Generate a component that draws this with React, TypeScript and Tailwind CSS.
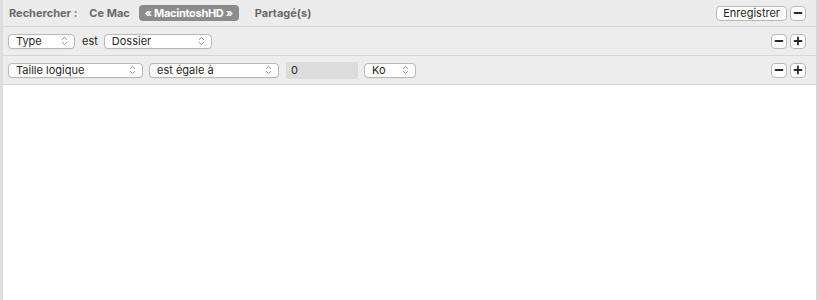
import React from 'react';

const font = { fontFamily: 'Inter, "Noto Sans", sans-serif' };

function Chevrons() {
  return (
    <svg width="7" height="10" viewBox="0 0 7 10" className="shrink-0">
      <path d="M1.2 3.6 L3.5 1.4 L5.8 3.6" fill="none" stroke="#8e8e8e" strokeWidth="1" strokeLinecap="round" strokeLinejoin="round" />
      <path d="M1.2 6.4 L3.5 8.6 L5.8 6.4" fill="none" stroke="#8e8e8e" strokeWidth="1" strokeLinecap="round" strokeLinejoin="round" />
    </svg>
  );
}

function Popup({ label, width }: { label: string; width: string }) {
  return (
    <div className={`${width} h-[15px] flex items-center justify-between pl-[7px] pr-[6px] bg-white border border-[#b9b9b9] rounded-[4px] text-[11px] text-[#262626] shadow-[0_0.5px_0.5px_rgba(0,0,0,0.08)]`}>
      <span className="leading-none">{label}</span>
      <Chevrons />
    </div>
  );
}

function SmallBtn({ children }: { children: React.ReactNode }) {
  return (
    <div className="w-[16px] h-[15px] flex items-center justify-center bg-white border border-[#b9b9b9] rounded-[4px]">
      {children}
    </div>
  );
}

const Minus = () => (
  <svg width="10" height="10" viewBox="0 0 10 10">
    <path d="M1.5 5 H8.5" stroke="#2a2a2a" strokeWidth="1.8" strokeLinecap="round" />
  </svg>
);
const Plus = () => (
  <svg width="10" height="10" viewBox="0 0 10 10">
    <path d="M1.5 5 H8.5 M5 1.5 V8.5" stroke="#2a2a2a" strokeWidth="1.8" strokeLinecap="round" />
  </svg>
);

export default function App() {
  return (
    <div className="w-[819px] h-[300px] flex bg-white overflow-hidden" style={font}>
      <div className="w-[3px] bg-[#dedede] shrink-0" />
      <div className="flex-1 flex flex-col">
        {/* scope bar */}
        <div className="h-[27px] shrink-0 flex items-center justify-between bg-[#ececec] border-b border-[#d6d6d6] pl-[6px] pr-[10px]">
          <div className="flex items-center text-[11px] font-bold text-[#6a6a6a]">
            <span>Rechercher :</span>
            <span className="ml-[12px]">Ce Mac</span>
            <span className="ml-[9px] px-[6px] h-[16px] flex items-center rounded-[4px] bg-[#8c8c8c] text-white tracking-[-0.3px]">« MacintoshHD »</span>
            <span className="ml-[16px]">Partagé(s)</span>
          </div>
          <div className="flex items-center gap-[3px]">
            <div className="h-[15px] px-[6px] flex items-center bg-white border border-[#b9b9b9] rounded-[4px] text-[11px] text-[#262626]">Enregistrer</div>
            <SmallBtn><Minus /></SmallBtn>
          </div>
        </div>

        {/* criterion 1 */}
        <div className="h-[29px] shrink-0 flex items-center justify-between bg-[#ededed] border-b border-[#d6d6d6] pl-[5px] pr-[10px]">
          <div className="flex items-center">
            <Popup label="Type" width="w-[67px]" />
            <span className="ml-[7px] mr-[6px] text-[11px] text-[#262626]">est</span>
            <Popup label="Dossier" width="w-[108px]" />
          </div>
          <div className="flex items-center gap-[3px]">
            <SmallBtn><Minus /></SmallBtn>
            <SmallBtn><Plus /></SmallBtn>
          </div>
        </div>

        {/* criterion 2 */}
        <div className="h-[29px] shrink-0 flex items-center justify-between bg-[#ededed] border-b border-[#d6d6d6] pl-[5px] pr-[10px]">
          <div className="flex items-center">
            <Popup label="Taille logique" width="w-[135px]" />
            <div className="w-[6px]" />
            <Popup label="est égale à" width="w-[130px]" />
            <div className="ml-[7px] w-[72px] h-[17px] flex items-center pl-[5px] bg-[#dcdcdc] text-[11px] text-[#262626]">0</div>
            <div className="w-[6px]" />
            <Popup label="Ko" width="w-[52px]" />
          </div>
          <div className="flex items-center gap-[3px]">
            <SmallBtn><Minus /></SmallBtn>
            <SmallBtn><Plus /></SmallBtn>
          </div>
        </div>

        <div className="flex-1 bg-white" />
      </div>
      <div className="w-[3px] bg-[#d6d6d6] shrink-0" />
    </div>
  );
}
